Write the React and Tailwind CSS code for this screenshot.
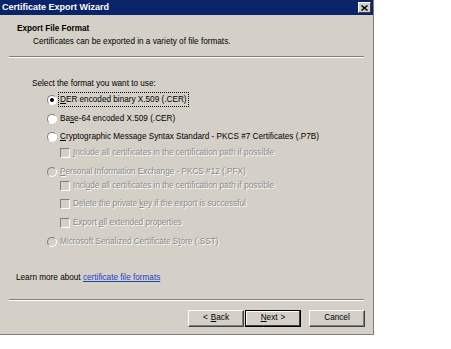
import React from 'react';

const FONT = { fontFamily: '"Liberation Sans", Arial, sans-serif' };

const Radio = ({ checked, disabled }) => (
  <span className="relative w-[10px] h-[10px] rounded-full shrink-0 bg-white border border-[#808080] border-r-white border-b-white flex items-center justify-center"
    style={disabled ? { background: '#d4d0c8' } : undefined}>
    {checked && <span className="w-[4px] h-[4px] rounded-full bg-black" />}
  </span>
);

const Check = () => (
  <span className="w-[10px] h-[10px] shrink-0 bg-[#d4d0c8] border border-[#808080] border-r-white border-b-white" />
);

const dis = 'text-[#8a8a8a] [text-shadow:1px_1px_0_#ffffff]';

const Btn = ({ children, def }) => (
  <button className={`w-[56px] h-[17px] bg-[#d4d0c8] text-[8.2px] text-black flex items-center justify-center border ${def ? 'border-black shadow-[inset_-1px_-1px_0_#404040,inset_1px_1px_0_#ffffff]' : 'border-[#ffffff] border-r-[#404040] border-b-[#404040] shadow-[inset_-1px_-1px_0_#808080]'}`}>
    {children}
  </button>
);

export default function App() {
  return (
    <div className="w-[451px] h-[349px] bg-white" style={FONT}>
      <div className="w-[374px] h-[335px] bg-[#d4d0c8] border-r border-b border-[#808080] flex flex-col">
        <div className="h-[15px] bg-[#0a246a] flex items-center justify-between pl-[2px] pr-[2px]">
          <span className="text-white font-bold text-[9px] leading-none">Certificate Export Wizard</span>
          <span className="w-[13px] h-[11px] bg-[#d4d0c8] border border-white border-r-[#404040] border-b-[#404040] flex items-center justify-center">
            <svg width="7" height="6" viewBox="0 0 7 6"><path d="M0.5 0.5L6.5 5.5M6.5 0.5L0.5 5.5" stroke="#000" strokeWidth="1.5" /></svg>
          </span>
        </div>

        <div className="pt-[7px] pl-[17px] text-[8.2px] leading-[13px] text-black">
          <div className="font-bold">Export File Format</div>
          <div className="pl-[16px]">Certificates can be exported in a variety of file formats.</div>
        </div>

        <div className="mx-[9px] mt-[8px] border-t border-[#808080] border-b border-b-white" />

        <div className="pl-[32px] pt-[19px] text-[8.2px] leading-[13px] text-black flex flex-col">
          <div>Select the format you want to use:</div>
          <div className="pl-[15px] flex flex-col">
            <div className="mt-[3px] flex items-center gap-[2px]">
              <Radio checked />
              <span className="outline outline-1 outline-dotted outline-black px-[1px]"><u>D</u>ER encoded binary X.509 (.CER)</span>
            </div>
            <div className="mt-[6px] flex items-center gap-[3px]">
              <Radio />
              <span>Ba<u>s</u>e-64 encoded X.509 (.CER)</span>
            </div>
            <div className="mt-[5px] flex items-center gap-[3px]">
              <Radio />
              <span><u>C</u>ryptographic Message Syntax Standard - PKCS #7 Certificates (.P7B)</span>
            </div>
            <div className="mt-[3px] pl-[13px] flex items-center gap-[3px]">
              <Check />
              <span className={dis}><u>I</u>nclude all certificates in the certification path if possible</span>
            </div>
            <div className="mt-[6px] flex items-center gap-[3px]">
              <Radio disabled />
              <span className={dis}><u>P</u>ersonal Information Exchange - PKCS #12 (.PFX)</span>
            </div>
            <div className="mt-[1px] pl-[13px] flex items-center gap-[3px]">
              <Check />
              <span className={dis}>Incl<u>u</u>de all certificates in the certification path if possible</span>
            </div>
            <div className="mt-[5px] pl-[13px] flex items-center gap-[3px]">
              <Check />
              <span className={dis}>Delete the private <u>k</u>ey if the export is successful</span>
            </div>
            <div className="mt-[6px] pl-[13px] flex items-center gap-[3px]">
              <Check />
              <span className={dis}>Export <u>a</u>ll extended properties</span>
            </div>
            <div className="mt-[6px] flex items-center gap-[3px]">
              <Radio disabled />
              <span className={dis}>Microsoft Serialized Certificate S<u>t</u>ore (.SST)</span>
            </div>
          </div>
        </div>

        <div className="pl-[16px] mt-[23px] text-[8.2px] leading-[13px] text-black">
          Learn more about <span className="text-[#1f3fbf] underline">certificate file formats</span>
        </div>

        <div className="mx-[9px] mt-[15px] border-t border-[#808080] border-b border-b-white" />

        <div className="mt-[9px] pr-[8px] flex justify-end">
          <Btn><span className="mr-[3px]">&lt;</span><u>B</u>ack</Btn>
          <div className="ml-[1px]"><Btn def><u>N</u>ext<span className="ml-[3px]">&gt;</span></Btn></div>
          <div className="ml-[8px]"><Btn>Cancel</Btn></div>
        </div>
      </div>
    </div>
  );
}
